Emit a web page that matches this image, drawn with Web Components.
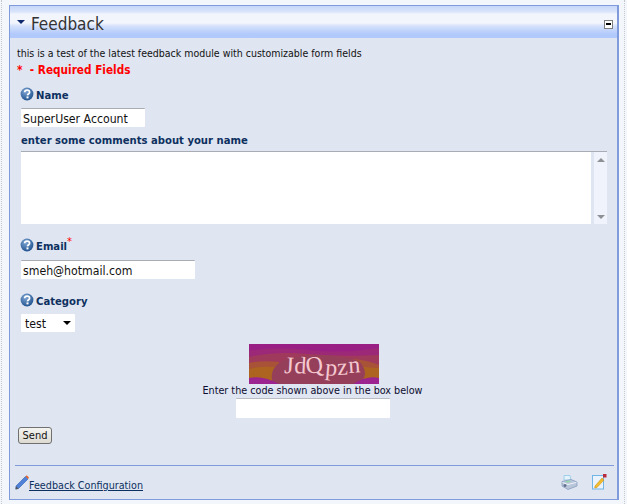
<!DOCTYPE html>
<html>
<head>
<meta charset="utf-8">
<title>Feedback</title>
<style>
html, body { margin: 0; height: 100%; }
body { background: #f3f6fb; overflow: hidden; }
</style>
</head>
<body>
<feedback-panel title-text="Feedback">
  <p-note>this is a test of the latest feedback module with customizable form fields</p-note>
  <required-note></required-note>
  <form-field label="Name" gap="4" top="10"><text-box value="SuperUser Account" w="124"></text-box></form-field>
  <comment-field label="enter some comments about your name"></comment-field>
  <form-field label="Email" required gap="5" top="15"><text-box value="smeh@hotmail.com" w="174"></text-box></form-field>
  <form-field label="Category" gap="4" top="15"><select-box value="test"></select-box></form-field>
  <captcha-box></captcha-box>
  <send-button>Send</send-button>
  <panel-footer>Feedback Configuration</panel-footer>
</feedback-panel>

<script>
const FONT = '"DejaVu Sans", sans-serif';

const HELP_ICON = `<svg width="14" height="14" viewBox="0 0 14 14">
  <defs><radialGradient id="h" cx="40%" cy="30%" r="75%"><stop offset="0" stop-color="#7fa6d4"/><stop offset="1" stop-color="#1c4f8c"/></radialGradient></defs>
  <circle cx="7" cy="7" r="6.4" fill="url(#h)"/>
  <path d="M4.6 5.3C4.7 3.8 5.8 3.1 7.1 3.1C8.6 3.1 9.6 4 9.6 5.2C9.6 6.7 7.6 6.8 7.5 8.4" fill="none" stroke="#fff" stroke-width="1.7"/>
  <rect x="6.5" y="9.4" width="2" height="2" fill="#fff"/>
</svg>`;

class FeedbackPanel extends HTMLElement {
  constructor() {
    super();
    this.attachShadow({mode: "open"});
  }
  connectedCallback() {
    this.shadowRoot.innerHTML = `
    <style>
    :host {
      display: block;
      position: absolute;
      left: 1px; right: 2px; top: 0; bottom: 0;
      box-sizing: border-box;
      padding: 5px 5px 4px 7px;
      border-left: 1px dotted #c4c8cf;
      border-right: 1px dotted #c4c8cf;
      font-family: ${FONT};
      font-stretch: condensed;
    }
    .box {
      height: 100%;
      box-sizing: border-box;
      border: 1px solid #7f9bdb;
      border-right-width: 2px;
      background: #dfe5f1;
      display: flex;
      flex-direction: column;
    }
    .head {
      height: 32px;
      flex: none;
      display: flex;
      align-items: center;
      padding: 0 4px 0 7px;
      background: linear-gradient(#c6d6f8 0, #dbe5fb 6px, #f2f5fc 8px, #f2f5fc 17px, #d4e1fb 20px, #b2c9fb 28px, #b0c8fb 32px);
      color: #333;
    }
    .tri { width: 0; height: 0; border-style: solid; border-color: #10296e transparent transparent; border-width: 4.5px 4.5px 0; margin: 0 6px 0 0; }
    h1 { margin: 3px 0 0; font: 400 17px ${FONT}; font-stretch: condensed; flex: 1; }
    .min { width: 7px; height: 7px; border: 1px solid #7f7f7f; background: #fff; position: relative; margin-top: 4px; }
    .min::after { content: ""; position: absolute; left: 1px; right: 1px; top: 2.5px; height: 2px; background: #000; }
    .body { flex: 1; display: flex; flex-direction: column; padding: 7px 11px 0 7px; min-height: 0; }
    </style>
    <div class="box">
      <div class="head"><span class="tri"></span><h1>${this.getAttribute("title-text")}</h1><span class="min"></span></div>
      <div class="body"><slot></slot></div>
    </div>`;
  }
}

class PNote extends HTMLElement {
  constructor() {
    super();
    this.attachShadow({mode: "open"}).innerHTML = `
    <style>:host { display: block; font: 10.5px/16px ${FONT}; font-stretch: condensed; color: #111; white-space: nowrap; }</style><slot></slot>`;
  }
}

class RequiredNote extends HTMLElement {
  constructor() {
    super();
    this.attachShadow({mode: "open"}).innerHTML = `
    <style>:host { display: block; margin-top: 1px; font: 700 11.7px/16px ${FONT}; font-stretch: condensed; color: #f00; white-space: nowrap; }</style>* &nbsp;- Required Fields`;
  }
}

class FieldLabel extends HTMLElement {
  constructor() {
    super();
    this.attachShadow({mode: "open"});
  }
  connectedCallback() {
    const star = this.hasAttribute("required") ? `<sup>*</sup>` : "";
    const icon = this.hasAttribute("plain") ? "" : `<span class="i">${HELP_ICON}</span>`;
    this.shadowRoot.innerHTML = `
    <style>
    :host { display: flex; align-items: center; height: 16px; font: 700 11.2px/16px ${FONT}; font-stretch: condensed; color: #0d3060; white-space: nowrap; }
    .i { display: flex; margin: -4px 2px 0 -1px; }
    sup { color: #f00; font-size: 11px; line-height: 0; position: relative; top: 0; vertical-align: super; font-weight: 400; }
    </style>${icon}<span>${this.getAttribute("text")}${star}</span>`;
  }
}
customElements.define("field-label", FieldLabel);

class FormField extends HTMLElement {
  constructor() {
    super();
    this.attachShadow({mode: "open"});
  }
  connectedCallback() {
    const req = this.hasAttribute("required") ? "required" : "";
    this.shadowRoot.innerHTML = `
    <style>
    :host { display: block; padding-left: 4px; margin-top: ${this.getAttribute("top") || 7}px; }
    .c { margin-top: ${this.getAttribute("gap")}px; }
    </style>
    <field-label text="${this.getAttribute("label")}" ${req}></field-label>
    <div class="c"><slot></slot></div>`;
  }
}

class TextBox extends HTMLElement {
  constructor() {
    super();
    this.attachShadow({mode: "open"});
  }
  connectedCallback() {
    this.shadowRoot.innerHTML = `
    <style>
    :host { display: block; width: ${this.getAttribute("w")}px; height: 19px; box-sizing: border-box;
      background: #fff; border-top: 1px solid #a9acb2; border-radius: 1px;
      font: 12.2px/20px ${FONT}; font-stretch: condensed; color: #111; padding-left: 2px; white-space: nowrap; overflow: hidden; }
    </style>${this.getAttribute("value") || ""}`;
  }
}

class CommentField extends HTMLElement {
  constructor() {
    super();
    this.attachShadow({mode: "open"});
  }
  connectedCallback() {
    this.shadowRoot.innerHTML = `
    <style>
    :host { display: block; margin-top: 6px; padding-left: 4px; }
    .area { margin-top: 2px; height: 73px; width: 586px; display: flex; border-top: 1px solid #a9acb2; box-sizing: border-box; background: #fff; }
    .fill { flex: 1; }
    .bar { width: 16px; background: #f0f3fb; border-left: 3px solid #dfe5f1; display: flex; flex-direction: column; justify-content: space-between; align-items: center; padding: 6px 0 5px; box-sizing: border-box; }
    .up, .dn { width: 0; height: 0; border: 4.5px solid transparent; }
    .up { border-bottom: 4px solid #8d9094; border-top: 0; }
    .dn { border-top: 4px solid #8d9094; border-bottom: 0; }
    </style>
    <field-label text="${this.getAttribute("label")}" plain></field-label>
    <div class="area"><div class="fill"></div><div class="bar"><span class="up"></span><span class="dn"></span></div></div>`;
  }
}

class SelectBox extends HTMLElement {
  constructor() {
    super();
    this.attachShadow({mode: "open"});
  }
  connectedCallback() {
    this.shadowRoot.innerHTML = `
    <style>
    :host { display: flex; align-items: center; justify-content: space-between; width: 54px; height: 18px; box-sizing: border-box;
      background: #fff; font: 12.2px/20px ${FONT}; font-stretch: condensed; color: #111; padding: 2px 4px 0 4px; border-radius: 1px; }
    .a { width: 0; height: 0; border: 4px solid transparent; border-top: 4px solid #000; border-bottom: 0; margin-top: -2px; }
    </style>${this.getAttribute("value")}<span class="a"></span>`;
  }
}

class CaptchaBox extends HTMLElement {
  constructor() {
    super();
    this.attachShadow({mode: "open"}).innerHTML = `
    <style>
    :host { display: flex; flex-direction: column; align-items: center; margin-top: 12px; padding-left: 2px; font: 10.7px/14px ${FONT}; font-stretch: condensed; color: #0c0c30; }
    svg { display: block; margin-left: 2px; }
    .in { width: 154px; height: 20px; background: #fff; border-top: 1px solid #b9bcc2; box-sizing: border-box; border-radius: 1px; }
    </style>
    <svg width="130" height="40" viewBox="0 0 130 40">
      <rect width="130" height="40" fill="#9a1f84"/>
      <path d="M0 7Q25 2 60 6T130 4V40H0Z" fill="#9c2878"/>
      <path d="M0 13Q25 7 60 10T130 11V40H0Z" fill="#a03a5c"/>
      <path d="M0 19Q14 16 30 18V40H0ZM104 40V15Q118 16 130 21V40Z" fill="#a85238"/>
      <path d="M0 25Q14 21 32 24V38H0ZM110 38V22Q120 24 130 24V36Z" fill="#ac6420"/>
      <path d="M24 40Q18 22 40 14Q75 7 110 17Q122 30 110 40Z" fill="#963f5a"/>
      <path d="M0 40V34Q14 31 30 40ZM104 40Q118 31 130 34V40Z" fill="#9c2490"/>
      <text x="35" y="29" font-family="Liberation Serif, serif" font-size="24" fill="#f4c8cf" letter-spacing="0.7" dy="0 0 1 1 0 -2" rotate="3 3 -8 5 -3 -4">JdQpzn</text>
    </svg>
    <span>Enter the code shown above in the box below</span>
    <div class="in"></div>`;
  }
}

class SendButton extends HTMLElement {
  constructor() {
    super();
    this.attachShadow({mode: "open"}).innerHTML = `
    <style>
    :host { display: block; margin: 9px 0 0 1px; }
    button { display: block; width: 34px; height: 17px; padding: 0; box-sizing: border-box; border: 1px solid #707070; border-radius: 3px;
      background: linear-gradient(#f4f4f1, #dcdad2); font: 11px ${FONT}; font-stretch: condensed; color: #111; }
    </style><button><slot></slot></button>`;
  }
}

class PanelFooter extends HTMLElement {
  constructor() {
    super();
    this.attachShadow({mode: "open"}).innerHTML = `
    <style>
    :host { display: flex; align-items: flex-end; justify-content: space-between; margin: auto -8px 6px -2px; padding-top: 7px; height: 20px; border-top: 1px solid #7f9bdb; }
    .l { display: flex; align-items: flex-end; }
    a { font: 10.7px/13px ${FONT}; font-stretch: condensed; color: #0d3060; text-decoration: underline; white-space: nowrap; margin: 0 0 1px 0; }
    .r { display: flex; gap: 14px; align-items: center; margin-right: 7px; margin-bottom: 3px; }
    svg { display: block; }
    </style>
    <div class="l">
      <svg width="14" height="16" viewBox="0 0 14 16" style="margin: 0 0 3px 0">
        <path d="M1 12L10.5 2.5L13 5L3.5 14.5L.8 15Z" fill="#4f81d8" stroke="#2f5fb0" stroke-width=".6"/>
        <path d="M10.5 2.5L11.8 1.2L14 3.4L13 5Z" fill="#e8662a"/>
        <path d="M1 12.4L.6 15.4L3.6 14.6Z" fill="#555"/>
      </svg>
      <a><slot></slot></a>
    </div>
    <div class="r">
      <svg width="17" height="15" viewBox="0 0 17 15">
        <path d="M3 .5H9L10 5H3Z" fill="#e4f2fb" stroke="#9ed0ea"/>
        <path d="M1 6.5L10 4.5L16 7V11L7 14.5L1 11Z" fill="#b9c6da" stroke="#7f95b8" stroke-width=".7"/>
        <path d="M1.5 7.5L7 9.5L15.5 7.3" fill="none" stroke="#eef3fa"/>
        <circle cx="4" cy="10.5" r="1.5" fill="#64728e"/>
        <path d="M4 6.5L8 5.6L10 6.6L6 7.5Z" fill="#8fd8a6"/>
      </svg>
      <svg width="15" height="16" viewBox="0 0 15 16">
        <rect x=".5" y="1.5" width="11" height="13.5" fill="#eaf3fb" stroke="#6fb5e6"/>
        <path d="M3 12L10 4L12 6L5 13.5L2.6 14Z" fill="#f2bc2c" stroke="#c58a10" stroke-width=".5"/>
        <rect x="11" y="0" width="3.5" height="3.5" fill="#b82c3c"/>
      </svg>
    </div>`;
  }
}

customElements.define("feedback-panel", FeedbackPanel);
customElements.define("p-note", PNote);
customElements.define("required-note", RequiredNote);
customElements.define("form-field", FormField);
customElements.define("text-box", TextBox);
customElements.define("comment-field", CommentField);
customElements.define("select-box", SelectBox);
customElements.define("captcha-box", CaptchaBox);
customElements.define("send-button", SendButton);
customElements.define("panel-footer", PanelFooter);
</script>
</body>
</html>
